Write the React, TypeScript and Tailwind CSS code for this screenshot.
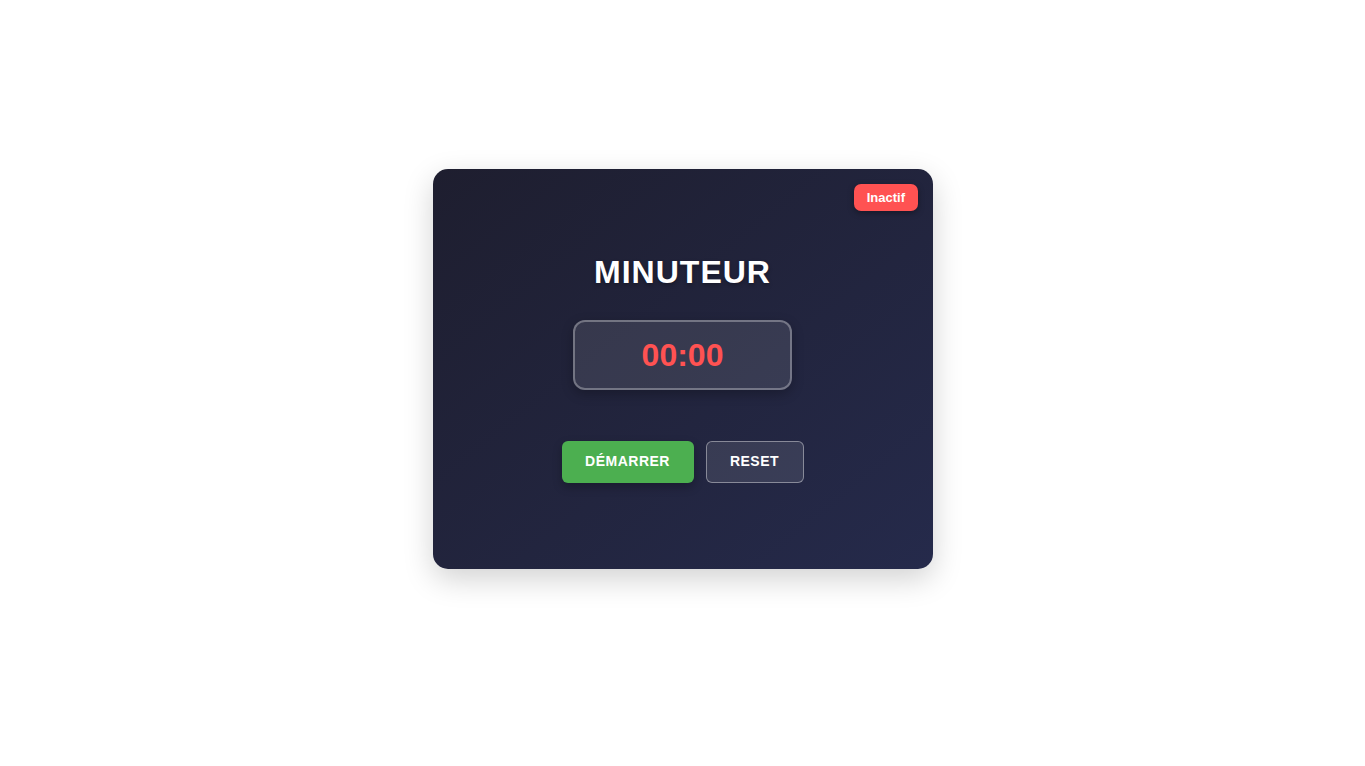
import React, { useState } from "react";

export default function App() {
  const [running, setRunning] = useState(false);
  const [seconds, setSeconds] = useState(0);

  const mm = String(Math.floor(seconds / 60)).padStart(2, "0");
  const ss = String(seconds % 60).padStart(2, "0");

  return (
    <div className="min-h-screen bg-white flex justify-center pt-[169px] font-['Liberation_Sans',Arial,sans-serif]">
      <div className="relative w-[500px] h-[400px] pb-[2px] rounded-[15px] bg-gradient-to-br from-[#1e1e2f] to-[#252a4b] shadow-[0_10px_30px_rgba(0,0,0,0.18)] flex flex-col items-center justify-center">
        <span
          className={`absolute top-[15px] right-[15px] h-[27px] px-[12.5px] flex items-center rounded-[7px] text-white text-[13px] font-bold shadow-[0_2px_6px_rgba(0,0,0,0.35)] ${
            running ? "bg-[#4caf50]" : "bg-[#ff5252]"
          }`}
        >
          {running ? "Actif" : "Inactif"}
        </span>

        <h1 className="text-[32px] leading-[37px] font-bold text-white tracking-[1px] [text-shadow:0_2px_4px_rgba(0,0,0,0.3)] mb-[29px]">
          MINUTEUR
        </h1>

        <div className="w-[219px] h-[70px] rounded-[12px] border-2 border-white/30 bg-white/10 flex items-center justify-center shadow-[0_4px_12px_rgba(0,0,0,0.25)] mb-[51px]">
          <span className="text-[32px] font-bold text-[#ff5252]">
            {mm}:{ss}
          </span>
        </div>

        <div className="flex gap-[12px]">
          <button
            onClick={() => setRunning(!running)}
            className="w-[132px] h-[42px] rounded-[6px] bg-[#4caf50] text-white text-[14px] font-bold tracking-[0.5px] shadow-[0_4px_10px_rgba(0,0,0,0.25)]"
          >
            {running ? "PAUSE" : "DÉMARRER"}
          </button>
          <button
            onClick={() => {
              setRunning(false);
              setSeconds(0);
            }}
            className="w-[98px] h-[42px] rounded-[6px] border border-white/40 bg-white/10 text-white text-[14px] font-bold tracking-[0.5px]"
          >
            RESET
          </button>
        </div>
      </div>
    </div>
  );
}
